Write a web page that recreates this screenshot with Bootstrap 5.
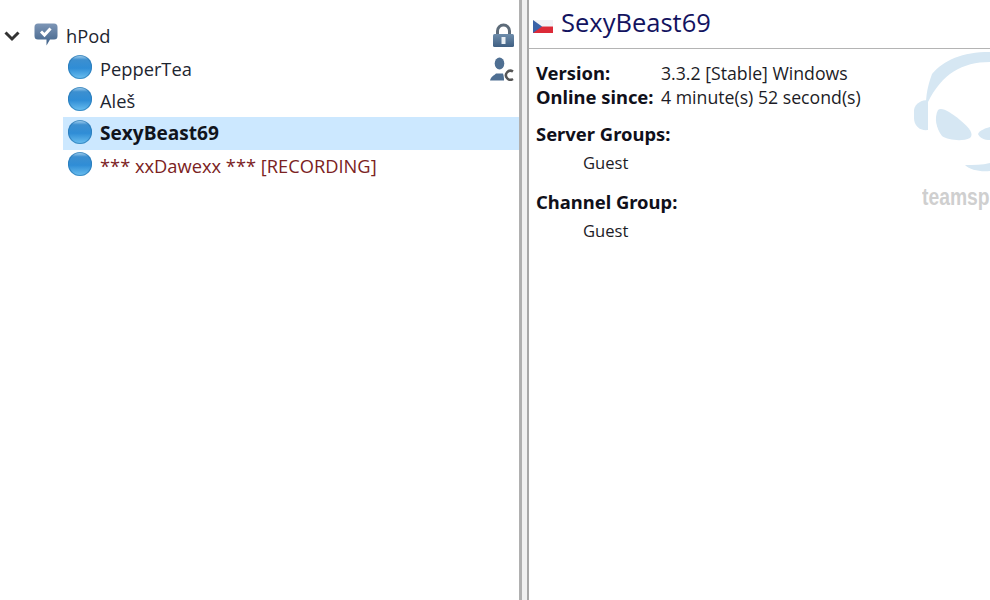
<!DOCTYPE html>
<html lang="en">
<head>
    <meta charset="UTF-8">
    <meta name="viewport" content="width=device-width, initial-scale=1.0">
    <title>hPod client info</title>
    <link rel="stylesheet" href="https://cdn.jsdelivr.net/npm/bootstrap@5.3.3/dist/css/bootstrap.min.css">
    <style>
        html, body { height: 100%; overflow: hidden; background: #fff; }
        .app-shell { width: 990px; height: 600px; }
        .tree-pane { width: 519px; padding-top: 20px; font-family: "Open Sans", "Noto Sans", sans-serif; font-size: 18.3px; color: #1d2530; }
        .split-bar { width: 10px; border-left: 3px solid #b0b0b0; border-right: 2px solid #a8a8a8; background: #f1f1f1; }
        .tree-row { height: 32.5px; }
        .server-row { height: 32px; padding-left: 4px; }
        .chevron { width: 16px; margin-right: 14px; }
        .server-icon { width: 24px; height: 23px; margin-right: 8px; margin-top: -4px; }
        .client-row { margin-left: 63px; padding-left: 5px; }
        .client-row.picked { background: #cce8ff; font-weight: 700; font-size: 19.1px; color: #10141c; }
        .client-row.rec { color: #7b2222; }
        .ball { width: 24px; height: 24px; border-radius: 50%; margin-right: 8px; margin-top: -3px; flex-shrink: 0;
            background: linear-gradient(#b5daf2 0, #3c8fd0 20%, #2f8dd6 55%, #6cc0f0 100%); box-shadow: inset 0 0 0 1px rgba(40, 120, 180, .7); }
        .side-icons { right: 5px; top: 23px; gap: 9px; }
        .info-pane { font-family: "Noto Sans", sans-serif; font-size: 16px; color: #1c1c26; }
        .title-row { height: 49px; border-bottom: 1px solid #b4b4b4; padding: 3px 0 0 4px; font-family: "Open Sans", sans-serif; font-size: 25.5px; line-height: 38px; color: #13135f; }
        .title-row svg { margin-right: 8px; margin-top: 17px; }
        .info-body { padding: 12px 0 0 7px; line-height: 24px; }
        .info-label { width: 125px; font-weight: 700; font-size: 18.4px; color: #10101a; white-space: nowrap; }
        .section-label { font-weight: 700; font-size: 18.4px; margin-top: 13px; height: 24px; color: #10101a; }
        .section-value { padding: 0 0 2px 47px; margin-top: 5px; margin-bottom: 0; font-size: 16.6px !important; }
        .info-text { font-family: "Open Sans", sans-serif; font-size: 17.7px; }
        .ts-logo { left: 383px; top: 50px; }
        .ts-word { left: 393px; top: 180px; font-family: "Liberation Sans", sans-serif; font-weight: 700; font-size: 23px; color: #cfcfcf; white-space: nowrap; transform: scaleX(.84); transform-origin: left center; }
        .info-wrap { width: 461px; overflow: hidden; }
    </style>
</head>
<body>
    <div class="app-shell d-flex">
        <section class="tree-pane position-relative flex-shrink-0">
            <div class="server-row d-flex align-items-center">
                <svg class="chevron" viewBox="0 0 16 12" height="12"><path d="M1.500 2.500 8 9l6.500-6.500" fill="none" stroke="#333" stroke-width="3"/></svg>
                <svg class="server-icon" viewBox="0 0 24 23">
                    <defs><linearGradient id="bubbleFill" x1="0" y1="0" x2="0" y2="1"><stop offset="0" stop-color="#7d96b6"/><stop offset="1" stop-color="#3e6088"/></linearGradient></defs>
                    <path d="M4 .5h16a3.500 3.500 0 0 1 3.500 3.500v9a3.500 3.500 0 0 1-3.500 3.500h-4l-3.500 6v-6H4A3.500 3.500 0 0 1 .5 13V4A3.500 3.500 0 0 1 4 .5z" fill="url(#bubbleFill)"/>
                    <path d="M7 8.500l3.500 3.500 6-6.500" fill="none" stroke="#fff" stroke-width="3"/>
                </svg>
                <span>hPod</span>
            </div>
            <div class="client-row tree-row d-flex align-items-center"><i class="ball"></i><span>PepperTea</span></div>
            <div class="client-row tree-row d-flex align-items-center"><i class="ball"></i><span>Aleš</span></div>
            <div class="client-row picked tree-row d-flex align-items-center"><i class="ball"></i><span>SexyBeast69</span></div>
            <div class="client-row rec tree-row d-flex align-items-center"><i class="ball"></i><span>*** xxDawexx *** [RECORDING]</span></div>
            <div class="side-icons position-absolute d-flex flex-column align-items-end">
                <svg width="21" height="25" viewBox="0 0 21 25">
                    <defs><linearGradient id="lockFill" x1="0" y1="0" x2="0" y2="1"><stop offset="0" stop-color="#6d8cab"/><stop offset="1" stop-color="#3f5f82"/></linearGradient></defs>
                    <path d="M4.500 12V8a6 6 0 0 1 12 0v4" fill="none" stroke="#5d6b79" stroke-width="3"/>
                    <rect x="0" y="11" width="21" height="13" rx="1.500" fill="url(#lockFill)"/>
                    <rect x="8.500" y="14" width="4" height="7" fill="#e8eef4"/>
                </svg>
                <svg width="24" height="24" viewBox="0 0 24 24">
                    <ellipse cx="9.500" cy="6.500" rx="4.800" ry="6" fill="#4f6f92"/>
                    <path d="M0 23.500c1-4 4-5 6-7h7c1 3 1 5 1 7z" fill="#4f6f92"/>
                    <path d="M23 14.500a4.500 4.500 0 1 0 0 7.500" fill="none" stroke="#555" stroke-width="2.500"/>
                </svg>
            </div>
        </section>
        <div class="split-bar flex-shrink-0"></div>
        <section class="info-pane info-wrap position-relative">
            <div class="title-row d-flex align-items-start">
                <svg width="20" height="13" viewBox="0 0 20 13">
                    <rect width="20" height="6.500" fill="#f2f2f6"/>
                    <rect y="6.500" width="20" height="6.500" fill="#dc2a38"/>
                    <path d="M0 0l9 6.500L0 13z" fill="#3a62a8"/>
                </svg>
                <span>SexyBeast69</span>
            </div>
            <div class="info-body">
                <div class="d-flex"><div class="info-label">Version:</div><div class="info-text">3.3.2 [Stable] Windows</div></div>
                <div class="d-flex"><div class="info-label">Online since:</div><div class="info-text">4 minute(s) 52 second(s)</div></div>
                <div class="section-label">Server Groups:</div>
                <p class="section-value info-text">Guest</p>
                <div class="section-label">Channel Group:</div>
                <p class="section-value info-text">Guest</p>
            </div>
            <svg class="ts-logo position-absolute" width="78" height="125" viewBox="0 0 78 125" fill="#d6e7f3">
                <path d="M14 55C14 40 18 30 20 24 32 10 50 2 78 2V12C50 12 30 24 16 52Z"/>
                <path d="M2 60C3 53 10 50 16 50V80C8 81 2 76 2 68Z"/>
                <path d="M26 60C30 57 38 62 48 70 58 78 62 84 58 88 50 92 36 90 30 86 24 78 22 68 26 60Z"/>
                <path d="M66 84C68 80 74 78 78 77V90C72 90 68 88 66 84Z"/>
                <path d="M53 115C62 115 70 115 78 113V121C68 122 58 120 53 115Z"/>
            </svg>
            <div class="ts-word position-absolute">teamsp</div>
        </section>
    </div>
    <script src="https://cdn.jsdelivr.net/npm/bootstrap@5.3.3/dist/js/bootstrap.bundle.min.js"></script>
</body>
</html>
